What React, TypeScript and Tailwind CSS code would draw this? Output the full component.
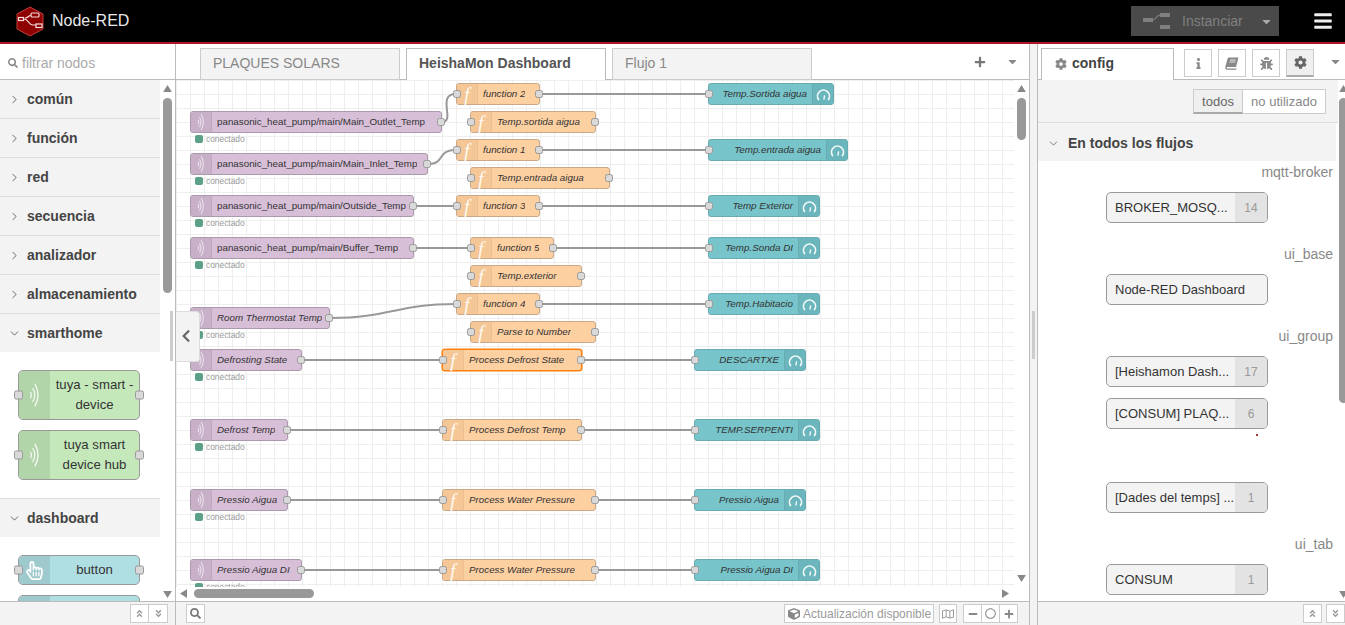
import React from "react";
import {
  FaAngleDoubleDown, FaAngleDoubleUp, FaBars, FaBug, FaCaretDown,
  FaChevronLeft, FaCog, FaCube, FaInfo, FaMinus, FaPlus, FaRegCircle, FaRegHandPointer, FaRegMap, FaSearch,
} from "react-icons/fa";
import { ChevronDown, ChevronRight } from "lucide-react";

type N = { t: string; x: number; y: number; w: number; plain?: boolean; sel?: boolean; status?: boolean; noIn?: boolean };

const inputs: N[] = [
  { t: "panasonic_heat_pump/main/Main_Outlet_Temp", x: 190, y: 111, w: 252, plain: true, status: true },
  { t: "panasonic_heat_pump/main/Main_Inlet_Temp", x: 190, y: 153, w: 238, plain: true, status: true },
  { t: "panasonic_heat_pump/main/Outside_Temp", x: 190, y: 195, w: 224, plain: true, status: true },
  { t: "panasonic_heat_pump/main/Buffer_Temp", x: 190, y: 237, w: 224, plain: true, status: true },
  { t: "Room Thermostat Temp", x: 190, y: 307, w: 140, status: true },
  { t: "Defrosting State", x: 190, y: 349, w: 112, status: true },
  { t: "Defrost Temp", x: 190, y: 419, w: 98, status: true },
  { t: "Pressio Aigua", x: 190, y: 489, w: 98, status: true },
  { t: "Pressio Aigua DI", x: 190, y: 559, w: 112, status: true },
];
const funcs: N[] = [
  { t: "function 2", x: 456, y: 83, w: 84 },
  { t: "Temp.sortida aigua", x: 470, y: 111, w: 126 },
  { t: "function 1", x: 456, y: 139, w: 84 },
  { t: "Temp.entrada aigua", x: 470, y: 167, w: 140 },
  { t: "function 3", x: 456, y: 195, w: 84 },
  { t: "function 5", x: 470, y: 237, w: 84 },
  { t: "Temp.exterior", x: 470, y: 265, w: 112 },
  { t: "function 4", x: 456, y: 293, w: 84 },
  { t: "Parse to Number", x: 470, y: 321, w: 126 },
  { t: "Process Defrost State", x: 442, y: 349, w: 140, sel: true },
  { t: "Process Defrost Temp", x: 442, y: 419, w: 140 },
  { t: "Process Water Pressure", x: 442, y: 489, w: 154 },
  { t: "Process Water Pressure", x: 442, y: 559, w: 154 },
];
const gauges: N[] = [
  { t: "Temp.Sortida aigua", x: 708, y: 83, w: 126 },
  { t: "Temp.entrada aigua", x: 708, y: 139, w: 140 },
  { t: "Temp Exterior", x: 708, y: 195, w: 112 },
  { t: "Temp.Sonda DI", x: 708, y: 237, w: 112 },
  { t: "Temp.Habitacio", x: 708, y: 293, w: 112 },
  { t: "DESCARTXE", x: 694, y: 349, w: 112 },
  { t: "TEMP.SERPENTI", x: 694, y: 419, w: 126 },
  { t: "Pressio Aigua", x: 694, y: 489, w: 112 },
  { t: "Pressio Aigua DI", x: 694, y: 559, w: 126 },
];

const wires = [
  "M442 122 C456 122 436 94 456 94",
  "M428 164 C446 164 436 150 456 150",
  "M414 206 L456 206",
  "M414 248 L470 248",
  "M330 318 C390 318 396 304 456 304",
  "M302 360 L442 360",
  "M288 430 L442 430",
  "M288 500 L442 500",
  "M302 570 L442 570",
  "M540 94 L708 94",
  "M540 150 L708 150",
  "M540 206 L708 206",
  "M554 248 L708 248",
  "M540 304 L708 304",
  "M582 360 L694 360",
  "M582 430 L694 430",
  "M596 500 L694 500",
  "M596 570 L694 570",
];

const Wave = ({ w, h, sw = 1.3 }: { w: number; h: number; sw?: number }) => (
  <svg width={w} height={h} viewBox="0 0 10 24" fill="none" stroke="#fff" strokeOpacity="0.85" strokeLinecap="round">
    <path d="M1.5 9.5 Q3 12 1.5 14.5" strokeWidth={sw} />
    <path d="M3.5 6 Q7 12 3.5 18" strokeWidth={sw} />
    <path d="M5.5 2 Q11 12 5.5 22" strokeWidth={sw} />
  </svg>
);
const Gauge = () => (
  <svg width="15" height="13" viewBox="0 0 15 13" fill="none" stroke="#fff" strokeOpacity="0.9" strokeLinecap="round">
    <path d="M2.5 11.5 A6 6 0 1 1 12.5 11.5" strokeWidth="1.7" />
    <path d="M8 11 L8.5 8" strokeWidth="1.5" />
  </svg>
);
const Book = () => (
  <svg width="14" height="13" viewBox="0 0 14 13" fill="#888">
    <path d="M4 0.5 H13.5 L11 10 H2.2 C1.4 10 1.4 11.5 2.2 11.5 H11.5 L11.2 12.7 H1.8 C0.2 12.7 0 11 0.4 9.6 L2.6 1.6 C2.8 0.9 3.3 0.5 4 0.5 Z" />
    <path d="M5 3 H10.8 M4.5 5 H10.3" stroke="#fff" strokeWidth="0.8" />
  </svg>
);

const Port = ({ side, big }: { side: "l" | "r"; big?: boolean }) =>
  big ? (
    <span className={`absolute top-1/2 h-[9px] w-[9px] -translate-y-1/2 rounded-[2px] border border-[#999] bg-[#d9d9d9] ${side === "l" ? "-left-[5px]" : "-right-[5px]"}`} />
  ) : (
    <span className={`absolute top-1/2 h-[8px] w-[8px] -translate-y-1/2 rounded-[2.5px] border border-[#999] bg-[#d9d9d9] ${side === "l" ? "-left-[4px]" : "-right-[4px]"}`} />
  );

const InputNode = ({ n }: { n: N }) => (
  <>
    <div className="absolute flex h-[22px] items-center rounded-[3px] border border-[#aa9aad] bg-[#d8bfd8]" style={{ left: n.x, top: n.y, width: n.w }}>
      <span className="flex h-full w-[21px] shrink-0 items-center justify-center rounded-l-[3px] border-r border-[#bda8c0] bg-[#c8b0c9]">
        <Wave w={8} h={18} sw={1.1} />
      </span>
      <span className={`truncate pl-[5px] text-[9.8px] text-[#333] ${n.plain ? "" : "italic"}`}>{n.t}</span>
      <Port side="r" />
    </div>
    <div className="absolute flex items-center" style={{ left: n.x + 5, top: n.y + 23 }}>
      <span className="h-[8px] w-[8px] rounded-[2px] bg-[#5a9f86]" />
      <span className="pl-[3px] text-[8.4px] leading-[10px] text-[#999]">conectado</span>
    </div>
  </>
);

const FuncNode = ({ n }: { n: N }) => (
  <div
    className={`absolute flex h-[22px] items-center rounded-[3px] border bg-[#fdd0a2] ${n.sel ? "border-[#ff7f0e] shadow-[0_0_0_0.5px_#ff7f0e]" : "border-[#c9a888]"}`}
    style={{ left: n.x, top: n.y, width: n.w }}
  >
    <span className="flex h-full w-[21px] shrink-0 items-center justify-center rounded-l-[3px] border-r border-[#eebf90] bg-[#f5c797] font-['Liberation_Serif',serif] text-[19px] italic leading-none text-[#fffaf2]">
      f
    </span>
    <span className="truncate pl-[5px] text-[9.8px] italic text-[#333]">{n.t}</span>
    <Port side="l" />
    <Port side="r" />
  </div>
);

const GaugeNode = ({ n }: { n: N }) => (
  <div className="absolute flex h-[22px] items-center rounded-[3px] border border-[#68abb0] bg-[#77c4ca]" style={{ left: n.x, top: n.y, width: n.w }}>
    <span className="flex-1 truncate pr-[5px] text-right text-[9.8px] italic text-[#333]">{n.t}</span>
    <span className="flex h-full w-[21px] shrink-0 items-center justify-center rounded-r-[3px] border-l border-[#68abb0] bg-[#6ab6bc]">
      <Gauge />
    </span>
    <Port side="l" />
  </div>
);

const Cat = ({ t, open }: { t: string; open?: boolean }) => (
  <div className={`flex w-[160px] shrink-0 items-center bg-[#f3f3f3] pl-[8px] text-[14px] font-bold text-[#444] ${open ? "h-[38px]" : "h-[39px] border-b border-[#ddd]"}`}>
    <span className="flex w-[19px] text-[#555]">{open ? <ChevronDown size={13} strokeWidth={1.6} /> : <ChevronRight size={13} strokeWidth={1.6} />}</span>
    {t}
  </div>
);

const PaletteNode = ({ color, div, icon, lines, h }: { color: string; div: string; icon: React.ReactNode; lines: string[]; h: number }) => (
  <div className={`relative ml-[18px] flex w-[122px] items-center rounded-[5px] border border-[#999] ${color}`} style={{ height: h }}>
    <span className={`flex h-full w-[31px] shrink-0 items-center justify-center rounded-l-[5px] ${div}`}>{icon}</span>
    <span className="flex-1 text-center text-[13.2px] leading-[20px] text-[#333]">
      {lines.map((l) => (
        <div key={l}>{l}</div>
      ))}
    </span>
    <Port side="l" big />
    <Port side="r" big />
  </div>
);

const IconBtn = ({ children, cls = "w-[19px]" }: { children: React.ReactNode; cls?: string }) => (
  <span className={`flex h-[19px] items-center justify-center border border-[#ccc] bg-white text-[#999] ${cls}`}>{children}</span>
);

const ConfigLabel = ({ t, mt }: { t: string; mt: string }) => (
  <div className={`pr-[12px] text-right text-[14px] leading-[16px] text-[#888] ${mt}`}>{t}</div>
);
const ConfigItem = ({ t, c, mt }: { t: string; c?: number; mt: string }) => (
  <div className={`ml-[68px] flex h-[31px] w-[162px] items-center overflow-hidden rounded-[5px] border border-[#999] bg-[#f3f3f3] text-[13px] text-[#333] ${mt}`}>
    <span className="flex-1 overflow-hidden whitespace-nowrap pl-[8px] pt-[1px] leading-[16px]">{t}</span>
    {c !== undefined && <span className="flex h-full w-[32px] shrink-0 items-center justify-center bg-[#e3e3e3] pt-[1px] text-[12px] text-[#999]">{c}</span>}
  </div>
);

const Tri = ({ dir, cls }: { dir: "u" | "d" | "l" | "r"; cls: string }) => {
  const p = { u: "M0 8 L5 0 L10 8 Z", d: "M0 0 L10 0 L5 8 Z", l: "M8 0 V10 L0 5 Z", r: "M0 0 V10 L8 5 Z" }[dir];
  return (
    <svg width={dir === "u" || dir === "d" ? 9 : 7} height={dir === "u" || dir === "d" ? 7 : 9} viewBox={dir === "u" || dir === "d" ? "0 0 10 8" : "0 0 8 10"} className={`absolute ${cls}`} fill="#888">
      <path d={p} />
    </svg>
  );
};

export default function App() {
  return (
    <div className="flex h-[625px] w-[1345px] flex-col overflow-hidden bg-white font-['Liberation_Sans',Arial,sans-serif]">
      {/* header */}
      <header className="flex h-[44px] shrink-0 items-center border-b-2 border-[#ad1625] bg-black">
        <svg width="28" height="31" viewBox="0 0 28 31" className="ml-[16px]">
          <path d="M14 1 L27 8 V23 L14 30 L1 23 V8 Z" fill="#8f0000" stroke="#c8413f" strokeWidth="1" />
          <g fill="none" stroke="#f3dcdc" strokeWidth="1.2">
            <path d="M4 13 H8 C13 13 12 19 17 19 H20" />
            <path d="M9 12 C13 12 12 9 16 9 H22" />
            <rect x="2.5" y="11.5" width="5" height="3" fill="#8f0000" />
            <rect x="15" y="7" width="8" height="4" rx="1" fill="#8f0000" />
            <rect x="20" y="18" width="6" height="3.5" fill="#8f0000" />
          </g>
        </svg>
        <span className="ml-[8px] text-[16px] text-[#e8e8e8]">Node-RED</span>
        <div className="ml-auto flex h-[30px] w-[148px] items-center bg-[#4a4a4a] pl-[12px] text-[#808080]">
          <svg width="28" height="18" viewBox="0 0 28 18" fill="#808080">
            <rect x="0" y="6" width="10" height="4" />
            <rect x="17" y="1" width="10" height="4" />
            <rect x="17" y="13" width="10" height="4" />
            <path d="M10 8 C13 8 13 3 17 3" fill="none" stroke="#808080" strokeWidth="1.2" />
          </svg>
          <span className="ml-[11px] text-[14px] leading-none">Instanciar</span>
          <FaCaretDown size={13} className="ml-[17px] text-[#aaa]" />
        </div>
        <FaBars size={20} className="ml-[34px] mr-[12px] text-[#eee]" />
      </header>

      <div className="flex min-h-0 flex-1">
        {/* palette */}
        <aside className="relative flex w-[176px] shrink-0 flex-col border-r border-[#bbb]">
          <div className="flex h-[36px] shrink-0 items-center border-b border-[#bbb] pl-[8px] pt-[3px] text-[14px] text-[#aaa]">
            <FaSearch size={10} className="mr-[4px] text-[#888]" />
            filtrar nodos
          </div>
          <div className="relative flex min-h-0 flex-1 flex-col overflow-hidden">
            <Cat t="común" />
            <Cat t="función" />
            <Cat t="red" />
            <Cat t="secuencia" />
            <Cat t="analizador" />
            <Cat t="almacenamiento" />
            <Cat t="smarthome" open />
            <div className="flex flex-col gap-[10px] pb-[18px] pt-[18px]">
              <PaletteNode h={50} color="bg-[#c5e8bb]" div="bg-[#b2d4a9]" icon={<Wave w={11} h={26} sw={1.2} />} lines={["tuya - smart -", "device"]} />
              <PaletteNode h={50} color="bg-[#c5e8bb]" div="bg-[#b2d4a9]" icon={<Wave w={11} h={26} sw={1.2} />} lines={["tuya smart", "device hub"]} />
            </div>
            <div className="border-t border-[#ddd]">
              <Cat t="dashboard" open />
            </div>
            <div className="flex flex-col gap-[10px] pt-[18px]">
              <PaletteNode h={30} color="bg-[#b0dfe3]" div="bg-[#9ec9cd]" icon={<FaRegHandPointer size={19} className="text-white" />} lines={["button"]} />
              <PaletteNode h={30} color="bg-[#b0dfe3]" div="bg-[#9ec9cd]" icon={null} lines={[""]} />
            </div>
            <div className="absolute bottom-0 right-0 top-0 w-[15px] bg-white">
              <Tri dir="u" cls="left-[3px] top-[5px]" />
              <div className="absolute left-[3px] top-[18px] h-[195px] w-[9px] rounded-[5px] bg-[#999]" />
              <Tri dir="d" cls="bottom-[3px] left-[3px]" />
            </div>
          </div>
          <div className="flex h-[24px] shrink-0 items-center justify-end border-t border-[#bbb] bg-[#f3f3f3] pr-[7px]">
            <IconBtn><FaAngleDoubleUp size={9} /></IconBtn>
            <IconBtn cls="w-[19px] border-l-0"><FaAngleDoubleDown size={9} /></IconBtn>
          </div>
        </aside>

        {/* workspace */}
        <main className="flex w-[853px] min-w-0 shrink-0 flex-col">
          <div className="flex h-[36px] shrink-0 items-end gap-[6px] border-b border-[#bbb] pl-[24px] text-[14px]">
            <div className="-mb-px flex h-[32px] w-[200px] items-center border border-[#ccc] bg-[#f3f3f3] pb-[2px] pl-[12px] text-[#888]">PLAQUES SOLARS</div>
            <div className="-mb-px flex h-[32px] w-[200px] items-center border border-b-0 border-[#bbb] bg-white pb-[2px] pl-[12px] font-bold text-[#555]">HeishaMon Dashboard</div>
            <div className="-mb-px flex h-[32px] w-[200px] items-center border border-[#ccc] bg-[#f3f3f3] pb-[2px] pl-[12px] text-[#888]">Flujo 1</div>
            <div className="ml-auto flex items-center self-center">
              <FaPlus size={12} className="text-[#777]" />
              <FaCaretDown size={13} className="ml-[20px] mr-[10px] text-[#888]" />
            </div>
          </div>
          <div className="relative min-h-0 flex-1 overflow-hidden bg-white">
            <div className="absolute left-0 top-0 h-[507px] w-[839px] bg-[linear-gradient(#eee_1px,transparent_1px),linear-gradient(90deg,#eee_1px,transparent_1px)] bg-[size:14px_14px]" />
            <div className="absolute -left-[176px] -top-[80px] h-[625px] w-[1345px]">
              <svg width="1345" height="625" className="absolute left-0 top-0" fill="none" stroke="#999" strokeWidth="2">
                {wires.map((d) => (
                  <path key={d} d={d} />
                ))}
              </svg>
              {inputs.map((n) => <InputNode key={n.t} n={n} />)}
              {funcs.map((n) => <FuncNode key={n.t + n.y} n={n} />)}
              {gauges.map((n) => <GaugeNode key={n.t + n.y} n={n} />)}
            </div>
            {/* clip band below canvas */}
            <div className="absolute bottom-0 left-0 h-[14px] w-full bg-white" />
            <div className="absolute right-0 top-0 h-full w-[15px] bg-white" />
            <Tri dir="u" cls="right-[3px] top-[5px]" />
            <div className="absolute right-[3px] top-[18px] h-[42px] w-[9px] rounded-[5px] bg-[#999]" />
            <Tri dir="d" cls="right-[3px] top-[495px]" />
            <Tri dir="l" cls="left-[4px] top-[509px]" />
            <div className="absolute left-[18px] top-[509px] h-[9px] w-[120px] rounded-[5px] bg-[#999]" />
            <Tri dir="r" cls="left-[826px] top-[509px]" />
          </div>
          <div className="flex h-[24px] shrink-0 items-center border-t border-[#bbb] bg-[#f3f3f3] pl-[10px] pr-[11px]">
            <IconBtn><FaSearch size={11} className="text-[#777]" /></IconBtn>
            <span className="ml-auto flex h-[19px] w-[150px] items-center border border-[#ccc] bg-white pl-[3px] text-[12px] text-[#999]">
              <FaCube size={12} className="mr-[3px] shrink-0 text-[#888]" />
              Actualización disponible
            </span>
            <span className="ml-[5px]"><IconBtn cls="w-[18px]"><FaRegMap size={12} /></IconBtn></span>
            <span className="ml-[6px] flex">
              <IconBtn cls="w-[19px]"><FaMinus size={10} className="text-[#888]" /></IconBtn>
              <IconBtn cls="w-[18px] border-l-0"><FaRegCircle size={11} className="text-[#888]" /></IconBtn>
              <IconBtn cls="w-[18px] border-l-0"><FaPlus size={10} className="text-[#888]" /></IconBtn>
            </span>
          </div>
        </main>

        {/* separator */}
        <div className="relative flex w-[9px] shrink-0 items-center justify-center border-x border-[#bbb] bg-[#f3f3f3]">
          <div className="h-[48px] w-[3px] bg-[#ccc]" />
        </div>

        {/* sidebar */}
        <aside className="flex min-w-0 flex-1 flex-col">
          <div className="flex h-[36px] shrink-0 items-end border-b border-[#bbb] pl-[3px]">
            <div className="-mb-px flex h-[32px] w-[133px] items-center border border-b-0 border-[#bbb] bg-white pb-[2px] pl-[13px] text-[14px] font-bold text-[#444]">
              <FaCog size={12} className="mr-[5px] text-[#888]" />
              config
            </div>
            <div className="mb-[2px] ml-[10px] flex gap-[6px] text-[#888]">
              <span className="flex h-[28px] w-[28px] items-center justify-center border border-[#ccc] bg-white"><FaInfo size={11} /></span>
              <span className="flex h-[28px] w-[28px] items-center justify-center border border-[#ccc] bg-white"><Book /></span>
              <span className="flex h-[28px] w-[28px] items-center justify-center border border-[#ccc] bg-white"><FaBug size={13} /></span>
              <span className="flex h-[28px] w-[28px] items-center justify-center border border-[#ccc] border-b-2 border-b-[#aaa] bg-[#efefef] text-[#666]"><FaCog size={13} /></span>
            </div>
            <FaCaretDown size={13} className="mb-[11px] ml-[15px] text-[#888]" />
          </div>
          <div className="relative min-h-0 flex-1 overflow-hidden">
            <div className="flex h-[43px] items-start justify-end border-b border-[#ddd] bg-[#f3f3f3] pr-[19px] pt-[9px] text-[13px]">
              <span className="flex h-[25px] w-[50px] items-center justify-center border border-[#ccc] border-b-2 border-b-[#aaa] bg-[#efefef] pt-[1px] text-[#666]">todos</span>
              <span className="flex h-[25px] w-[83px] items-center justify-center border border-l-0 border-[#ccc] bg-white pt-[1px] text-[#888]">no utilizado</span>
            </div>
            <div className="flex h-[38px] w-[298px] items-center bg-[#f3f3f3] pl-[9px] pt-[2px] text-[14px] font-bold text-[#444]">
              <ChevronDown size={13} strokeWidth={1.6} className="mr-[8px] text-[#666]" />
              En todos los flujos
            </div>
            <ConfigLabel t="mqtt-broker" mt="mt-[3px]" />
            <ConfigItem t="BROKER_MOSQ..." c={14} mt="mt-[12px]" />
            <ConfigLabel t="ui_base" mt="mt-[23px]" />
            <ConfigItem t="Node-RED Dashboard" mt="mt-[12px]" />
            <ConfigLabel t="ui_group" mt="mt-[23px]" />
            <ConfigItem t="[Heishamon Dash..." c={17} mt="mt-[12px]" />
            <ConfigItem t="[CONSUM] PLAQ..." c={6} mt="mt-[11px]" />
            <ConfigItem t="[Dades del temps] ..." c={1} mt="mt-[53px]" />
            <ConfigLabel t="ui_tab" mt="mt-[23px]" />
            <ConfigItem t="CONSUM" c={1} mt="mt-[12px]" />
            <span className="absolute left-[218px] top-[354px] h-[2px] w-[2px] bg-[#a33]" />
            <div className="absolute bottom-0 right-0 top-0 w-[7px] bg-white">
              <Tri dir="u" cls="left-[1px] top-[5px]" />
              <div className="absolute left-[1px] top-[18px] h-[305px] w-[9px] rounded-[5px] bg-[#999]" />
              <Tri dir="d" cls="bottom-[3px] left-[1px]" />
            </div>
          </div>
          <div className="flex h-[24px] shrink-0 items-center justify-end gap-[4px] border-t border-[#bbb] bg-[#f3f3f3]">
            <IconBtn><FaAngleDoubleUp size={9} /></IconBtn>
            <IconBtn><FaAngleDoubleDown size={9} /></IconBtn>
          </div>
        </aside>
      </div>

      {/* palette collapse tab, floats over the canvas */}
      <div className="absolute left-[170px] top-[310px] flex h-[52px] w-[30px] items-center">
        <div className="h-[50px] w-[3px] bg-[#ccc]" />
        <div className="ml-[3px] flex h-[51px] w-[24px] items-center justify-center rounded-r-[4px] border border-l-0 border-[#ddd] bg-[#f3f3f3] pr-[3px] text-[#666]">
          <FaChevronLeft size={14} />
        </div>
      </div>
    </div>
  );
}
